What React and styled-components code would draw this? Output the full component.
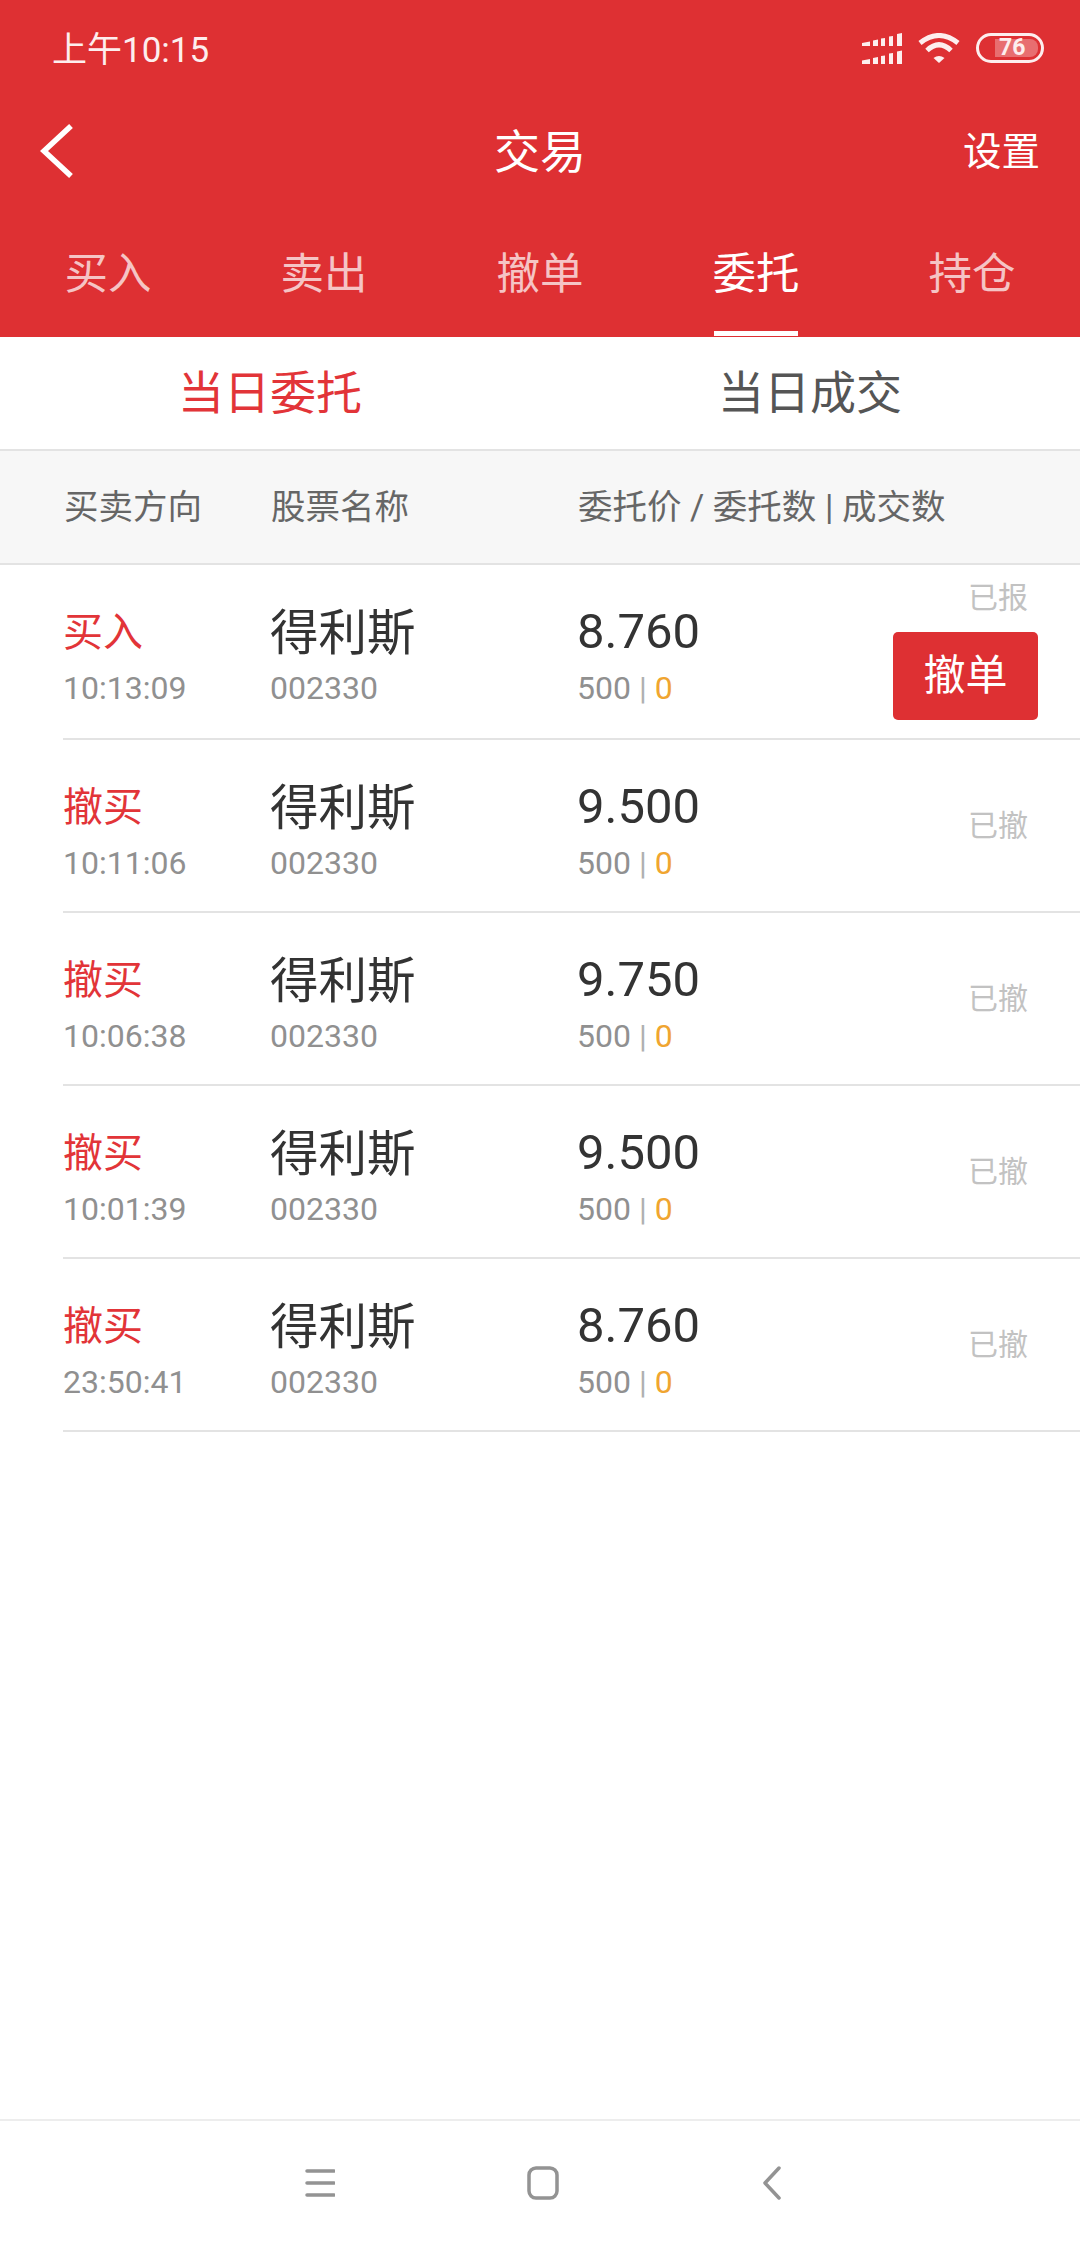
import React from 'react'
import styled, { createGlobalStyle } from 'styled-components'

const GlobalStyle = createGlobalStyle`
    html, body {
        margin: 0;
        padding: 0;
        background: #fff;
    }
    body {
        font-family: Roboto, "Noto Sans CJK SC", sans-serif;
    }
`

const Page = styled.div`
    width: 1080px;
    height: 2248px;
    display: flex;
    flex-direction: column;
    background: #fff;
    overflow: hidden;
`

const Header = styled.header`
    height: 337px;
    flex-shrink: 0;
    background: #de3033;
    color: #fff;
    display: flex;
    flex-direction: column;
`

const StatusBar = styled.div`
    height: 96px;
    display: flex;
    align-items: center;
    justify-content: space-between;
    padding: 4px 36px 0 52px;
    box-sizing: border-box;
`

const Clock = styled.span`
    font-size: 35px;
    line-height: 1;
    color: #fdeeee;
`

const StatusIcons = styled.div`
    display: flex;
    align-items: center;
    gap: 16px;
    margin-top: -4px;
`

const Battery = styled.div`
    position: relative;
    box-sizing: border-box;
    width: 68px;
    height: 30px;
    border: 3px solid #fdeeee;
    border-radius: 15px;
    display: flex;
    align-items: center;
    padding: 0 3px 0 16px;
`

const BatteryFill = styled.div`
    width: 43px;
    height: 18px;
    background: rgba(255, 255, 255, 0.3);
    border-radius: 0 8px 8px 0;
`

const BatteryLabel = styled.span`
    position: absolute;
    left: 20px;
    top: 0;
    font-size: 23px;
    line-height: 24px;
    font-weight: 700;
    color: #fdeeee;
`

const TitleBar = styled.div`
    height: 110px;
    display: grid;
    grid-template-columns: 1fr auto 1fr;
    align-items: center;
    padding: 2px 40px 0;
    box-sizing: border-box;
`

const BackButton = styled.div`
    display: flex;
    align-items: center;
    margin-top: -3px;
`

const Title = styled.div`
    font-size: 46px;
    line-height: 1;
`

const SettingLink = styled.div`
    justify-self: end;
    font-size: 38.5px;
    line-height: 1;
`

const TabBar = styled.nav`
    flex: 1;
    display: grid;
    grid-template-columns: repeat(5, 1fr);
`

const Tab = styled.div`
    position: relative;
    display: flex;
    justify-content: center;
    padding-top: 37px;
    font-size: 43.5px;
    line-height: 64px;
    color: ${p => (p.$active ? '#fff' : 'rgba(255, 255, 255, 0.72)')};
    &::after {
        content: '';
        display: ${p => (p.$active ? 'block' : 'none')};
        position: absolute;
        bottom: 1px;
        left: 66px;
        width: 84px;
        height: 5px;
        background: #fff;
    }
`

const SubTabs = styled.div`
    height: 112px;
    flex-shrink: 0;
    display: grid;
    grid-template-columns: 1fr 1fr;
    align-items: center;
    justify-items: center;
`

const SubTab = styled.div`
    font-size: 46px;
    line-height: 1;
    color: ${p => (p.$active ? '#e23438' : '#555')};
`

const ColumnHeader = styled.div`
    box-sizing: border-box;
    height: 116px;
    flex-shrink: 0;
    display: grid;
    grid-template-columns: 207px 307px 1fr;
    align-items: center;
    padding-left: 64px;
    background: #f7f7f7;
    border-top: 2px solid #e3e3e3;
    border-bottom: 2px solid #e3e3e3;
    font-size: 34.5px;
    line-height: 1;
    color: #666;
`

const OrderList = styled.div`
    flex: 1;
    display: flex;
    flex-direction: column;
    padding-left: 63px;
`

const OrderRow = styled.div`
    box-sizing: border-box;
    height: ${p => (p.$first ? '175px' : '173px')};
    display: grid;
    grid-template-columns: 207px 307px 1fr 145px;
    padding-right: 42px;
    padding-top: 30px;
    border-bottom: 2px solid #e3e3e3;
`

const Cell = styled.div`
    display: flex;
    flex-direction: column;
`

const Direction = styled.div`
    height: 68px;
    margin-bottom: 6px;
    display: flex;
    align-items: center;
    font-size: 40px;
    color: #e23438;
`

const StockName = styled.div`
    height: 68px;
    margin-bottom: 6px;
    display: flex;
    align-items: center;
    font-size: 48.5px;
    color: #333;
`

const Price = styled.div`
    height: 68px;
    margin-bottom: 6px;
    display: flex;
    align-items: center;
    font-size: 49px;
    padding-top: 4px;
    box-sizing: border-box;
    color: #333;
`

const SubText = styled.div`
    font-size: 32px;
    line-height: 38px;
    color: #909090;
`

const Pipe = styled.span`
    color: #b0b0b0;
`

const Filled = styled.span`
    color: #f0a530;
`

const StatusCell = styled.div`
    display: flex;
    flex-direction: column;
    align-items: flex-end;
    margin-top: ${p => (p.$withCancel ? '-15px' : '38px')};
`

const StatusText = styled.div`
    font-size: 30px;
    line-height: 36px;
    padding-right: 10px;
    color: #c2c2c2;
`

const CancelButton = styled.div`
    width: 145px;
    height: 88px;
    margin-top: 16px;
    flex-shrink: 0;
    display: flex;
    align-items: center;
    justify-content: center;
    border-radius: 5px;
    background: #de3033;
    color: #fff;
    font-size: 42px;
    line-height: 1;
`

const NavBar = styled.div`
    height: 129px;
    flex-shrink: 0;
    display: flex;
    align-items: center;
    padding: 0 0 3px 305px;
    box-sizing: border-box;
    border-top: 2px solid #ededed;
`

const NavIcon = styled.svg`
    display: block;
    margin-right: ${p => p.$gap || 0}px;
    fill: none;
    stroke: #939393;
    stroke-width: 3.5;
    stroke-linecap: round;
    stroke-linejoin: round;
`

const orders = [
    { dir: '买入', time: '10:13:09', price: '8.760', status: '已报', cancel: true },
    { dir: '撤买', time: '10:11:06', price: '9.500', status: '已撤' },
    { dir: '撤买', time: '10:06:38', price: '9.750', status: '已撤' },
    { dir: '撤买', time: '10:01:39', price: '9.500', status: '已撤' },
    { dir: '撤买', time: '23:50:41', price: '8.760', status: '已撤' },
]

const tabs = ['买入', '卖出', '撤单', '委托', '持仓']

const SignalIcon = () => (
    <svg width="40" height="31" viewBox="0 0 40 31" fill="#fdeeee">
        <path d="M0 10L8 8.5V13H0zM11 7.5L16 6.5V13H11zM19 5.5L23 5V13H19zM27 3.5L31 3V13H27zM35 1L40 0V13H35z" />
        <path d="M0 27.5L8 26V31H0zM11 25L16 24V31H11zM19 23L23 22.5V31H19zM27 20.5L31 20V31H27zM35 18.5L40 17.5V31H35z" />
    </svg>
)

const WifiIcon = () => (
    <svg width="42" height="30" viewBox="0 0 42 30" fill="none" stroke="#fdeeee" strokeWidth="5">
        <path d="M2 10Q21 -5 40 10" />
        <path d="M9 17.5Q21 6 33 17.5" />
        <path d="M15.5 25Q21 21 26.5 25L21 30z" fill="#fdeeee" stroke="none" />
    </svg>
)

const BackIcon = () => (
    <svg width="34" height="56" viewBox="0 0 34 56" fill="none" stroke="#fff" strokeWidth="5.5">
        <path d="M31 3L4 28l27 25" />
    </svg>
)

const App = () => {
    return (
        <Page>
            <GlobalStyle />
            <Header>
                <StatusBar>
                    <Clock>上午10:15</Clock>
                    <StatusIcons>
                        <SignalIcon />
                        <WifiIcon />
                        <Battery>
                            <BatteryFill />
                            <BatteryLabel>76</BatteryLabel>
                        </Battery>
                    </StatusIcons>
                </StatusBar>
                <TitleBar>
                    <BackButton>
                        <BackIcon />
                    </BackButton>
                    <Title>交易</Title>
                    <SettingLink>设置</SettingLink>
                </TitleBar>
                <TabBar>
                    {tabs.map(t => (
                        <Tab key={t} $active={t === '委托'}>{t}</Tab>
                    ))}
                </TabBar>
            </Header>
            <SubTabs>
                <SubTab $active>当日委托</SubTab>
                <SubTab>当日成交</SubTab>
            </SubTabs>
            <ColumnHeader>
                <span>买卖方向</span>
                <span>股票名称</span>
                <span>委托价 / 委托数 | 成交数</span>
            </ColumnHeader>
            <OrderList>
                {orders.map((o, i) => (
                    <OrderRow key={o.time} $first={i === 0}>
                        <Cell>
                            <Direction>{o.dir}</Direction>
                            <SubText>{o.time}</SubText>
                        </Cell>
                        <Cell>
                            <StockName>得利斯</StockName>
                            <SubText>002330</SubText>
                        </Cell>
                        <Cell>
                            <Price>{o.price}</Price>
                            <SubText>500 <Pipe>|</Pipe> <Filled>0</Filled></SubText>
                        </Cell>
                        <StatusCell $withCancel={o.cancel}>
                            <StatusText>{o.status}</StatusText>
                            {o.cancel && <CancelButton>撤单</CancelButton>}
                        </StatusCell>
                    </OrderRow>
                ))}
            </OrderList>
            <NavBar>
                <NavIcon $gap={192} width="30" height="30" viewBox="0 0 30 30">
                    <path d="M2 3h27M2 15h27M2 27h27" />
                </NavIcon>
                <NavIcon $gap={204} width="32" height="34" viewBox="0 0 32 34">
                    <rect x="2" y="2" width="28" height="30" rx="7" />
                </NavIcon>
                <NavIcon width="18" height="34" viewBox="0 0 18 34">
                    <path d="M16 2L2 17l14 15" />
                </NavIcon>
            </NavBar>
        </Page>
    )
}

export default App
